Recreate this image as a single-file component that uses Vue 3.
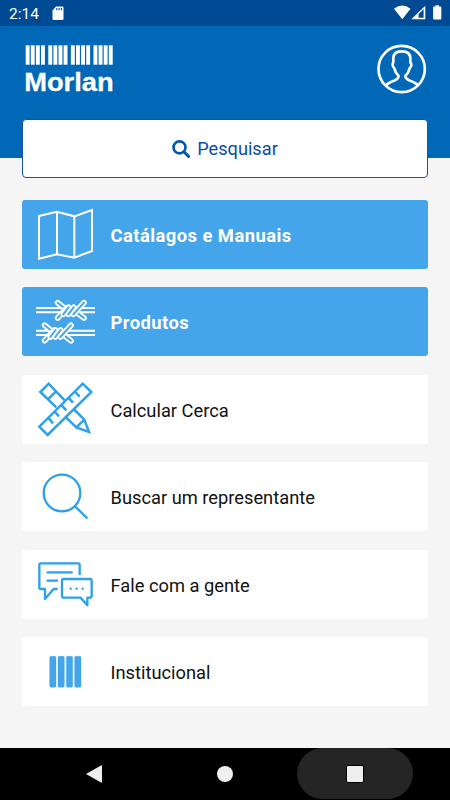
<template>
  <div class="screen">
    <!-- Barra de status -->
    <div class="status-bar">
      <span class="clock">2:14</span>
      <svg class="sd-card" width="12" height="15" viewBox="0 0 12 15">
        <path d="M4 .5h6.3q1.2 0 1.2 1.2v11.1q0 1.2-1.2 1.2H1.7Q.5 14 .5 12.800V4.500z" fill="#fff" />
        <path d="M4.800 2v2.300M7.100 2v2.300M9.400 2v2.300" stroke="#004a94" stroke-width="1.100" />
      </svg>
      <svg class="signals" width="50" height="16" viewBox="0 0 50 16">
        <path d="M1 3.700Q9.200-2.600 17.500 3.700L9.300 14.200z" fill="#fff" />
        <path d="M18.300 14.300L32.300 .7v13.600z" fill="#fff" />
        <path d="M25.600 12.700V9L30.600 4.300v8.400z" fill="#004a94" />
        <path d="M42.500 1.600V.3h3.400v1.300h1.600q.8 0 .8.800v11.300q0 .8-.8.800h-6.600q-.8 0-.8-.8V2.400q0-.8.8-.8z" fill="#fff" />
      </svg>
    </div>

    <!-- Cabeçalho -->
    <header class="header">
      <svg class="logo" width="92" height="52" viewBox="0 0 92 52">
        <rect v-for="x in logoBars" :key="x" :x="x" y="1.300" width="3.900" height="19.400" fill="#fff" />
        <text x="-.8" y="46.600" textLength="89.500" lengthAdjust="spacingAndGlyphs">Morlan</text>
      </svg>
      <svg class="user" width="50" height="50" viewBox="80 133 150 150">
        <g fill="none" stroke="#fff" stroke-width="8" stroke-linejoin="round">
          <circle cx="154" cy="208" r="69.500" />
          <path d="M107 257Q112 250 131 243Q145 237 145 229Q134 218 132 206Q127 202 127 195Q127 190 129 188V176Q129 155 154 155Q180 155 180 176V188Q183 190 183 195Q183 202 178 206Q176 218 165 229Q165 237 179 243Q198 250 203 257" />
        </g>
      </svg>
    </header>

    <main class="content">
      <button type="button" class="search">
        <svg width="18" height="18" viewBox="0 0 18 18">
          <circle cx="7.500" cy="7.400" r="6" fill="none" stroke="#0057b0" stroke-width="2.600" />
          <path d="M11.800 11.700l4.800 4.700" stroke="#0057b0" stroke-width="3" stroke-linecap="round" />
        </svg>
        <span>Pesquisar</span>
      </button>

      <!-- Menu principal -->
      <nav class="menu">
        <a v-for="item in items" :key="item.icon" class="card" :class="{ active: item.active }">
          <svg class="icon" viewBox="21 15 264 207">
            <g v-if="item.icon === 'map'" stroke-width="6">
              <path d="M72 63L126 50L178 64L231 45V168L178 188L126 178L72 191zM126 50V178M178 64V188" />
            </g>

            <g v-else-if="item.icon === 'wire'">
              <g v-for="knot in knots" :key="knot.y" :transform="`translate(${knot.x} ${knot.y})`">
                <path :d="knot.wire" stroke-width="6" />
                <g v-for="(d, i) in strands" :key="i" stroke-linecap="round">
                  <path :d="d" stroke-width="17" />
                  <path :d="d" stroke="#45a5ea" stroke-width="6" />
                </g>
              </g>
            </g>

            <g v-else-if="item.icon === 'ruler'" stroke-width="7.500">
              <path d="M203 41L229 66L98 195L73 170zM181 66l13 14M163 86l11 12M140 106l14 15M121 127l11 12M102 146l12 14" />
              <path d="M124 112L76 66L101 41L149 91M98 89L123 64M153 142L184 172L222 186L208 149L176 117M184 172L208 149" />
            </g>

            <g v-else-if="item.icon === 'search'" stroke-width="7">
              <circle cx="141" cy="108" r="55" />
              <path d="M180 148L217 184" />
            </g>

            <g v-else-if="item.icon === 'chat'" stroke-width="7" stroke-linejoin="round">
              <path d="M194 90V59Q194 55 190 55H77Q73 55 73 59V128Q73 132 77 132H90V162L116 132H128M95 82H173M95 107H129" />
              <path d="M146 102H225Q230 102 230 107V153Q230 158 225 158H217V181L197 158H146Q141 158 141 153V107Q141 102 146 102z" />
              <path d="M167 131h.1M185 131h.1M203 131h.1" stroke-linecap="round" />
            </g>

            <g v-else>
              <rect v-for="x in [104, 129, 154, 179]" :key="x" class="bar" :x="x" y="73" width="19" height="93" rx="4" />
            </g>
          </svg>
          <span class="label">{{ item.label }}</span>
        </a>
      </nav>
    </main>

    <!-- Navegação do Android -->
    <footer class="android-nav">
      <div class="key">
        <svg width="16" height="18" viewBox="0 0 16 18"><path d="M0 9L15 .4Q16 0 16 1v16q0 1-1 .6z" fill="#eee" /></svg>
      </div>
      <div class="key"><span class="home"></span></div>
      <div class="key pressed"><span class="recents"></span></div>
    </footer>
  </div>
</template>

<script setup>
const items = [
  { icon: 'map', label: 'Catálagos e Manuais', active: true },
  { icon: 'wire', label: 'Produtos', active: true },
  { icon: 'ruler', label: 'Calcular Cerca' },
  { icon: 'search', label: 'Buscar um representante' },
  { icon: 'chat', label: 'Fale com a gente' },
  { icon: 'bars', label: 'Institucional' }
];

// 4 grupos de 4 barras
const logoBars = [];
for (let group = 0; group < 4; group++) {
  for (let bar = 0; bar < 4; bar++) {
    logoBars.push(0.7 + group * 22.6 + bar * 5.1);
  }
}

// Arame farpado: os dois nós usam os mesmos fios
const knots = [
  { x: 120, y: 54, wire: 'M-57 24H24M-57 37H24M73 24H120M73 37H120' },
  { x: 81, y: 122, wire: 'M-18 24H24M-18 37H24M73 24H159M73 37H159' }
];
const strands = [
  'M8 8L28 24',
  'M66 38L87 54',
  'M8 54L36 23',
  'M25 43L41 22',
  'M40 43L56 22',
  'M55 43L87 8'
];
</script>

<style>
body {
  margin: 0;
}
</style>

<style scoped>
.screen {
  width: 450px;
  height: 800px;
  display: flex;
  flex-direction: column;
  overflow: hidden;
  background: #f5f5f5;
  font-family: Roboto, "Liberation Sans", sans-serif;
}

.status-bar {
  height: 26px;
  flex: none;
  display: flex;
  align-items: center;
  padding: 0 7px 0 9px;
  background: #004a94;
  color: #fff;
}

.clock {
  font-size: 15.500px;
  line-height: 26px;
  padding-top: 2px;
  width: 43px;
}

.signals {
  margin: 0 0 0 auto;
}

.header {
  height: 132px;
  flex: none;
  box-sizing: border-box;
  display: flex;
  justify-content: space-between;
  align-items: flex-start;
  padding: 18px 23px 0 25px;
  background: #0068b7;
}

.logo text {
  font-family: "Liberation Sans", sans-serif;
  font-size: 26.500px;
  font-weight: bold;
  fill: #fff;
  stroke: #fff;
  stroke-width: 0.3px;
}

.content {
  flex: 1;
  padding: 0 22px;
  margin-top: -39px;
}

.search {
  width: 100%;
  height: 59px;
  display: flex;
  align-items: center;
  justify-content: center;
  gap: 7px;
  border: 1px solid #1c52a3;
  border-radius: 4px;
  background: #fff;
  color: #0a4cab;
  font-family: inherit;
  font-size: 18.200px;
}

.menu {
  display: flex;
  flex-direction: column;
  gap: 18.400px;
  margin-top: 22px;
}

.card {
  height: 69px;
  display: flex;
  align-items: center;
  border-radius: 3px;
  background: #fff;
  color: #111;
  font-size: 18.300px;
}

.card.active {
  background: #45a5ea;
  color: #fff;
  font-size: 18.400px;
  font-weight: bold;
  letter-spacing: 0.440px;
}

.icon {
  width: 88px;
  height: 69px;
  flex: none;
  fill: none;
  stroke: #2fa0ea;
}

.active .icon {
  stroke: #fff;
}

.bar {
  fill: #45a5ea;
  stroke: #2fa0ea;
  stroke-width: 1;
}

.label {
  padding: 2px 0 0 0.500px;
}

.active .label {
  padding-top: 1px;
}

.android-nav {
  height: 52px;
  flex: none;
  display: flex;
  justify-content: center;
  gap: 14px;
  background: #000;
}

.key {
  width: 116px;
  height: 51px;
  border-radius: 26px;
  display: flex;
  align-items: center;
  justify-content: center;
}

.key svg {
  margin-right: 2px;
}

.key.pressed {
  background: #252525;
}

.home {
  width: 16px;
  height: 16px;
  border-radius: 50%;
  background: #eee;
}

.recents {
  width: 16px;
  height: 16px;
  border: 1px solid #000;
  border-radius: 2px;
  background: #eee;
}
</style>
